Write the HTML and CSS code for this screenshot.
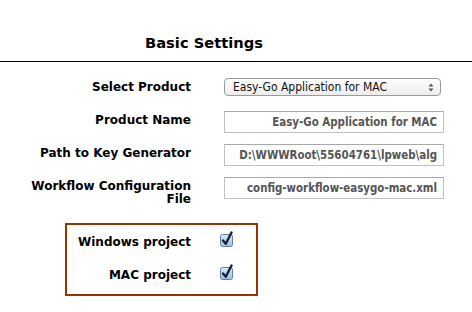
FILE: index.html
```html
<!DOCTYPE html>
<html>
<head>
<meta charset="utf-8">
<link rel="stylesheet" href="styles.css">
</head>
<body>
<div class="page">
  <h2 class="title">Basic Settings</h2>
  <div class="rule"></div>
  <div class="form">
    <div class="row row-select">
      <div class="label">Select Product</div>
      <div class="select">
        <span class="select-text">Easy-Go Application for MAC</span>
        <svg class="arrows" width="6" height="9" viewBox="0 0 6 9"><path d="M0.5 3.5 L3 0.5 L5.5 3.5 Z M0.5 5.5 L3 8.5 L5.5 5.5 Z" fill="#555"/></svg>
      </div>
    </div>
    <div class="row">
      <div class="label">Product Name</div>
      <div class="input">Easy-Go Application for MAC</div>
    </div>
    <div class="row">
      <div class="label">Path to Key Generator</div>
      <div class="input">D:\WWWRoot\55604761\lpweb\alg</div>
    </div>
    <div class="row">
      <div class="label">Workflow Configuration File</div>
      <div class="input">config-workflow-easygo-mac.xml</div>
    </div>
  </div>
  <div class="box">
    <div class="check-row">
      <div class="label">Windows project</div>
      <svg class="check" width="14" height="17" viewBox="0 0 14 17">
        <defs>
          <linearGradient id="cb" x1="0" y1="0" x2="0" y2="1">
            <stop offset="0" stop-color="#dbe9fa"/>
            <stop offset="1" stop-color="#9cc0ec"/>
          </linearGradient>
        </defs>
        <rect x="0.5" y="3.5" width="12" height="12" rx="2" fill="url(#cb)" stroke="#6b7d96"/>
        <path d="M3 9.5 L5.8 12.8 L11.5 1.5" fill="none" stroke="#16243a" stroke-width="2.4" stroke-linecap="round" stroke-linejoin="round"/>
      </svg>
    </div>
    <div class="check-row">
      <div class="label">MAC project</div>
      <svg class="check" width="14" height="17" viewBox="0 0 14 17">
        <rect x="0.5" y="3.5" width="12" height="12" rx="2" fill="url(#cb)" stroke="#6b7d96"/>
        <path d="M3 9.5 L5.8 12.8 L11.5 1.5" fill="none" stroke="#16243a" stroke-width="2.4" stroke-linecap="round" stroke-linejoin="round"/>
      </svg>
    </div>
  </div>
</div>
</body>
</html>
```

FILE: styles.css
```css
html, body {
  margin: 0;
  padding: 0;
  background: #fff;
}
.page {
  width: 472px;
  height: 312px;
  overflow: hidden;
  font-family: "DejaVu Sans", Verdana, sans-serif;
  color: #000;
}
.title {
  margin: 0;
  padding: 33px 0 0 145px;
  height: 28px;
  font-size: 14.7px;
  line-height: 20px;
  font-weight: bold;
}
.rule {
  height: 1px;
  background: #000;
}
.form {
  padding-top: 16px;
}
.row {
  display: grid;
  grid-template-columns: 191px 220px;
  column-gap: 33px;
  align-items: start;
  margin-bottom: 11px;
}
.row-select {
  margin-bottom: 15px;
  align-items: center;
}
.label {
  font-size: 12px;
  line-height: 13px;
  font-weight: bold;
  text-align: right;
  padding-top: 3px;
  justify-self: end;
  max-width: 166px;
}
.row-select .label {
  padding-top: 0;
}
.select {
  box-sizing: border-box;
  width: 217px;
  height: 18px;
  border: 1px solid #9a9a9a;
  border-radius: 4px;
  background: linear-gradient(#ffffff, #ececec);
  display: flex;
  align-items: center;
  justify-content: space-between;
  padding: 0 6px 0 8px;
  font-family: "DejaVu Sans Condensed", "DejaVu Sans", sans-serif;
  font-stretch: condensed;
  font-size: 12px;
  color: #111;
}
.arrows {
  display: block;
}
.input {
  box-sizing: border-box;
  height: 22px;
  border: 1px solid #c2c2c2;
  border-top-color: #a8a8a8;
  background: #fff;
  padding: 0 6px;
  text-align: right;
  font-family: "DejaVu Sans Condensed", "DejaVu Sans", sans-serif;
  font-stretch: condensed;
  font-size: 11.4px;
  font-weight: bold;
  line-height: 20px;
  color: #555;
  white-space: nowrap;
  overflow: hidden;
}
.box {
  margin: 17px 0 0 65px;
  width: 193px;
  box-sizing: border-box;
  border: 2px solid #993300;
  padding: 11px 0 12px 0;
}
.check-row {
  display: grid;
  grid-template-columns: 124px 14px;
  column-gap: 29px;
  align-items: start;
}
.check-row + .check-row {
  margin-top: 20px;
}
.check-row .label {
  padding-top: 0;
}
.check {
  display: block;
  margin-top: -5px;
}
```
